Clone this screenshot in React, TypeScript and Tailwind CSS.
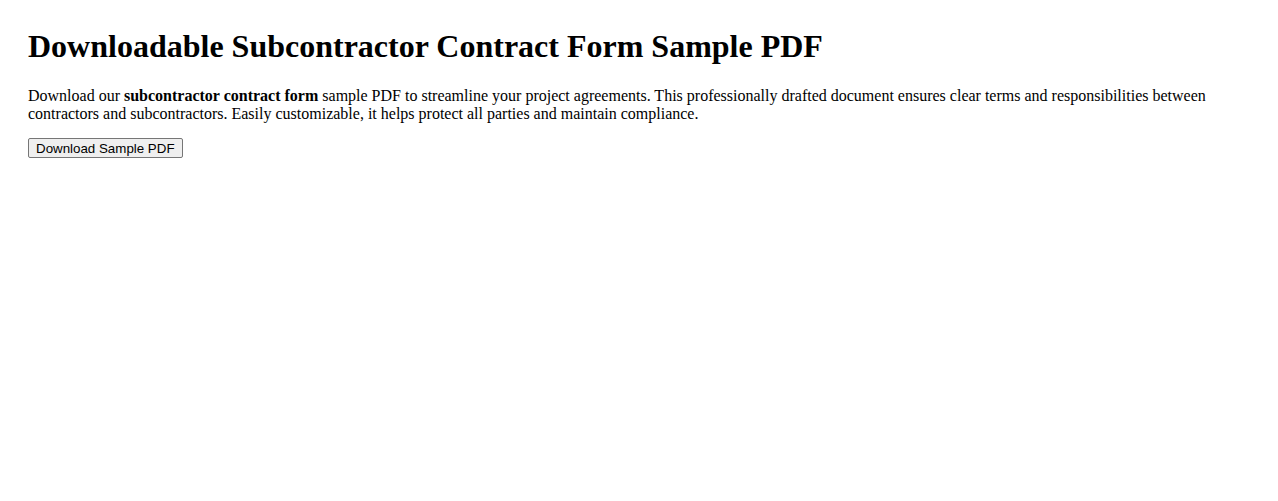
export default function App() {
  return (
    <div className="min-h-screen bg-white p-7 text-black font-['Liberation_Serif','Times_New_Roman',serif]">
      <h1 className="mb-[21.75px] text-[32px] font-bold leading-[normal]">
        Downloadable Subcontractor Contract Form Sample PDF
      </h1>
      <p className="mb-[13px] text-base leading-[normal]">
        Download our <strong className="font-bold">subcontractor contract form</strong> sample PDF to streamline
        your project agreements. This professionally drafted document ensures clear terms and responsibilities
        between contractors and subcontractors. Easily customizable, it helps protect all parties and maintain
        compliance.
      </p>
      <button
        type="button"
        className="h-5 rounded-[2px] border border-[#767676] bg-[#efefef] px-[7px] text-[13.333px] leading-[normal] font-['Liberation_Sans',Arial,sans-serif] hover:bg-[#e5e5e5]"
      >
        Download Sample PDF
      </button>
    </div>
  );
}
